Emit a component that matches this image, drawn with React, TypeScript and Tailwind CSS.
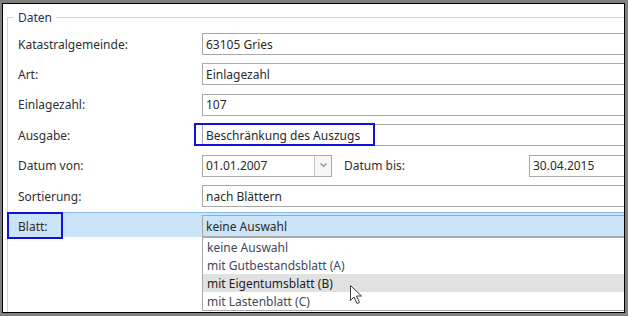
import React from "react";

const rows = [
  { label: "Katastralgemeinde:", value: "63105 Gries", h: "h-[30px]" },
  { label: "Art:", value: "Einlagezahl", h: "h-[30px]" },
  { label: "Einlagezahl:", value: "107", h: "h-[31px]" },
];

const options = [
  "keine Auswahl",
  "mit Gutbestandsblatt (A)",
  "mit Eigentumsblatt (B)",
  "mit Lastenblatt (C)",
];

const Field = ({ value, className = "" }: { value: string; className?: string }) => (
  <div
    className={`h-[22px] flex items-center border border-[#a9a9a9] pl-[3px] text-[#2b2b2b] whitespace-nowrap ${className}`}
  >
    {value}
  </div>
);

const Cursor = () => (
  <svg
    className="absolute left-[346px] top-[280px]"
    width="14"
    height="21"
    viewBox="0 0 14 21"
  >
    <path
      d="M1.5 1.5 L1.5 16.5 L5 13 L8 19.5 L10.5 18.5 L7.5 12 L12.5 12 Z"
      fill="#fff"
      stroke="#3a3a3a"
      strokeWidth="1"
      strokeLinejoin="round"
    />
  </svg>
);

export default function App() {
  return (
    <div
      className="w-[628px] h-[316px] border-l-2 border-t-[3px] border-r-[3px] border-b-[3px] border-[#808080] bg-white"
      style={{ fontFamily: '"Noto Sans", Arial, sans-serif' }}
    >
      <div className="relative h-full border border-black overflow-hidden bg-white text-[12px] leading-[17px] text-[#2f2f2f]">
        <fieldset className="ml-[4px] mt-[5px] w-[700px] h-[340px] border border-[#d6d6d6] pt-[3px]">
          <legend className="ml-[6px] px-[4px] text-[#22335e]">Daten</legend>

          {rows.map((r) => (
            <div key={r.label} className={`flex items-center pl-[10px] ${r.h}`}>
              <div className="w-[184px] shrink-0">{r.label}</div>
              <Field value={r.value} className="flex-1" />
            </div>
          ))}

          <div className="relative flex items-center pl-[10px] h-[30px]">
            <div className="w-[184px] shrink-0">Ausgabe:</div>
            <Field value="Beschränkung des Auszugs" className="flex-1" />
            <div className="absolute left-[186px] top-[3px] w-[181px] h-[23px] border-2 border-[#1010e0]" />
          </div>

          <div className="flex items-center pl-[10px] h-[31px]">
            <div className="w-[184px] shrink-0">Datum von:</div>
            <div className="w-[130px] h-[22px] flex border border-[#a9a9a9] text-[#2b2b2b]">
              <div className="flex-1 flex items-center pl-[3px]">01.01.2007</div>
              <div className="w-[17px] flex items-center justify-center border-l border-[#c6c6c6] bg-[#f7f7f7]">
                <svg width="7" height="5" viewBox="0 0 7 5">
                  <path d="M0.5 0.5 L3.5 3.5 L6.5 0.5" fill="none" stroke="#8a8a8a" strokeWidth="1.2" />
                </svg>
              </div>
            </div>
            <div className="ml-[12px] w-[185px] shrink-0">Datum bis:</div>
            <Field value="30.04.2015" className="flex-1" />
          </div>

          <div className="flex items-center pl-[10px] h-[30px]">
            <div className="w-[184px] shrink-0">Sortierung:</div>
            <Field value="nach Blättern" className="flex-1" />
          </div>

          <div className="relative mt-px -ml-px flex pl-[11px] pt-[2px] h-[25px] border-t border-[#8cbce6] bg-[#cce4f7]">
            <div className="w-[184px] shrink-0 flex items-center h-[22px]">Blatt:</div>
            <Field value="keine Auswahl" className="flex-1" />
            <div className="absolute left-0 top-[-1px] w-[56px] h-[27px] border-2 border-[#1010e0]" />
            <div className="absolute left-[195px] top-[24px] w-[520px] border border-[#a9a9a9] bg-white">
              {options.map((o, i) => (
                <div
                  key={o}
                  className={`h-[18px] flex items-center pl-[4px] ${
                    i === 2 ? "bg-[#e1e1e1] text-[#1f1f1f]" : "text-[#3d4862]"
                  }`}
                >
                  {o}
                </div>
              ))}
            </div>
          </div>
        </fieldset>
        <Cursor />
      </div>
    </div>
  );
}
